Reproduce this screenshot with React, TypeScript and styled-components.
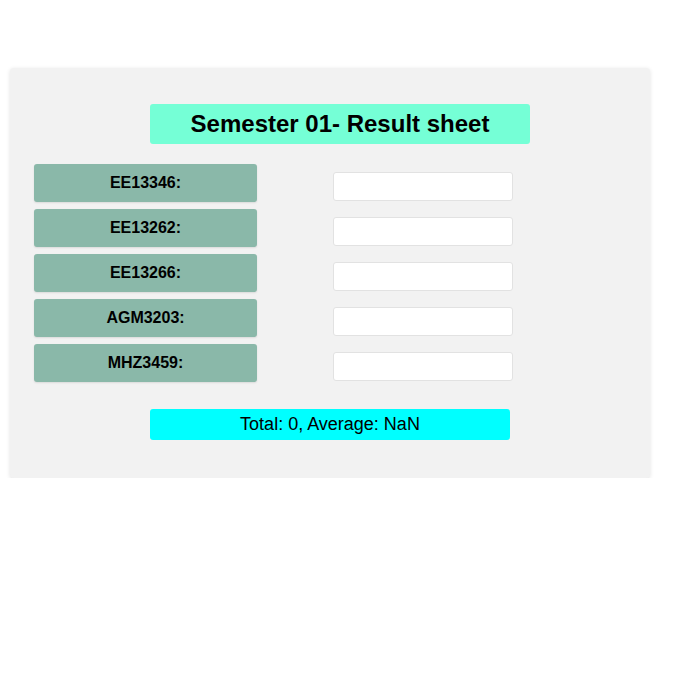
import React from "react";
import styled, { createGlobalStyle } from "styled-components";

const Global = createGlobalStyle`
  body { margin: 0; background: #ffffff; font-family: "Liberation Sans", Arial, sans-serif; }
`;

const Page = styled.div`
  padding: 68px 36px 0 10px;
`;

const Card = styled.div`
  width: 640px;
  height: 410px;
  box-sizing: border-box;
  background: #f2f2f2;
  border-radius: 4px;
  box-shadow: 0 1px 4px rgba(0, 0, 0, 0.12);
  padding: 36px 0 0 24px;
  display: flex;
  flex-direction: column;
`;

const Title = styled.h1`
  margin: 0 0 20px 116px;
  width: 380px;
  height: 40px;
  background: #75ffd6;
  border-radius: 3px;
  font-size: 24px;
  font-weight: bold;
  color: #000;
  display: flex;
  align-items: center;
  justify-content: center;
`;

const Rows = styled.div`
  display: flex;
  flex-direction: column;
  gap: 7px;
`;

const Row = styled.div`
  display: flex;
  align-items: flex-start;
  gap: 76px;
`;

const Label = styled.div`
  width: 223px;
  height: 38px;
  background: #8ab8a9;
  border-radius: 3px;
  box-shadow: 0 1px 2px rgba(0, 0, 0, 0.1);
  font-size: 16px;
  font-weight: bold;
  color: #000;
  display: flex;
  align-items: center;
  justify-content: center;
`;

const Input = styled.input`
  margin-top: 8px;
  width: 180px;
  height: 29px;
  box-sizing: border-box;
  border: 1px solid #e2e2e2;
  border-radius: 3px;
  background: #fff;
  outline: none;
`;

const Total = styled.div`
  margin: 27px 0 0 116px;
  width: 360px;
  height: 31px;
  background: #00ffff;
  border-radius: 3px;
  font-size: 18px;
  color: #000;
  display: flex;
  align-items: center;
  justify-content: center;
`;

const subjects = ["EE13346:", "EE13262:", "EE13266:", "AGM3203:", "MHZ3459:"];

export default function App() {
  return (
    <>
      <Global />
      <Page>
        <Card>
          <Title>Semester 01- Result sheet</Title>
          <Rows>
            {subjects.map((s) => (
              <Row key={s}>
                <Label>{s}</Label>
                <Input type="text" />
              </Row>
            ))}
          </Rows>
          <Total>Total: 0, Average: NaN</Total>
        </Card>
      </Page>
    </>
  );
}
